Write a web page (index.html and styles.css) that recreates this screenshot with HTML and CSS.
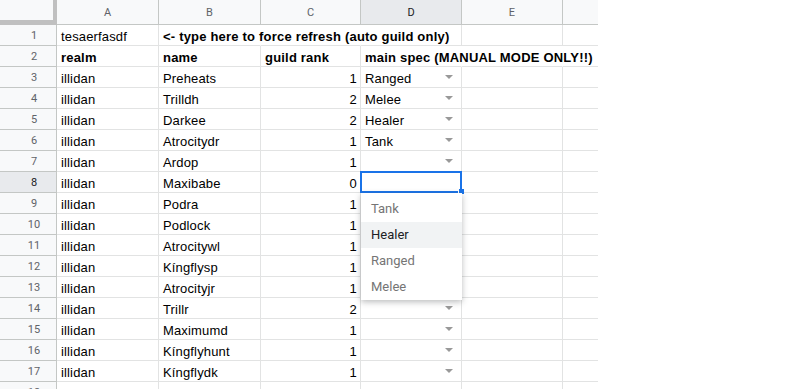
FILE: index.html
```html
<!DOCTYPE html>
<html lang="en">
<head>
    <meta charset="UTF-8">
    <title>Guild roster</title>
    <link rel="stylesheet" href="styles.css">
</head>
<body>

    <div class="sheet">
        <div class="corner"></div>
        <div class="col-head">A</div>
        <div class="col-head">B</div>
        <div class="col-head">C</div>
        <div class="col-head on">D</div>
        <div class="col-head">E</div>
        <div class="col-head last"></div>

        <div class="row-head">1</div>
        <div class="cell">tesaerfasdf</div>
        <div class="cell bold flow">&lt;- type here to force refresh (auto guild only)</div>
        <div class="cell flow"></div>
        <div class="cell"></div>
        <div class="cell"></div>
        <div class="cell last"></div>

        <div class="row-head">2</div>
        <div class="cell bold">realm</div>
        <div class="cell bold">name</div>
        <div class="cell bold">guild rank</div>
        <div class="cell bold flow">main spec (MANUAL MODE ONLY!!)</div>
        <div class="cell flow"></div>
        <div class="cell last"></div>

        <div class="row-head">3</div>
        <div class="cell">illidan</div>
        <div class="cell">Preheats</div>
        <div class="cell num">1</div>
        <div class="cell spec">Ranged<span class="arrow"></span></div>
        <div class="cell"></div>
        <div class="cell last"></div>

        <div class="row-head">4</div>
        <div class="cell">illidan</div>
        <div class="cell">Trilldh</div>
        <div class="cell num">2</div>
        <div class="cell spec">Melee<span class="arrow"></span></div>
        <div class="cell"></div>
        <div class="cell last"></div>

        <div class="row-head">5</div>
        <div class="cell">illidan</div>
        <div class="cell">Darkee</div>
        <div class="cell num">2</div>
        <div class="cell spec">Healer<span class="arrow"></span></div>
        <div class="cell"></div>
        <div class="cell last"></div>

        <div class="row-head">6</div>
        <div class="cell">illidan</div>
        <div class="cell">Atrocitydr</div>
        <div class="cell num">1</div>
        <div class="cell spec">Tank<span class="arrow"></span></div>
        <div class="cell"></div>
        <div class="cell last"></div>

        <div class="row-head">7</div>
        <div class="cell">illidan</div>
        <div class="cell">Ardop</div>
        <div class="cell num">1</div>
        <div class="cell spec"><span class="arrow"></span></div>
        <div class="cell"></div>
        <div class="cell last"></div>

        <div class="row-head on">8</div>
        <div class="cell">illidan</div>
        <div class="cell">Maxibabe</div>
        <div class="cell num">0</div>
        <div class="cell active"></div>
        <div class="cell"></div>
        <div class="cell last"></div>

        <div class="row-head">9</div>
        <div class="cell">illidan</div>
        <div class="cell">Podra</div>
        <div class="cell num">1</div>
        <div class="cell"></div>
        <div class="cell"></div>
        <div class="cell last"></div>

        <div class="row-head">10</div>
        <div class="cell">illidan</div>
        <div class="cell">Podlock</div>
        <div class="cell num">1</div>
        <div class="cell"></div>
        <div class="cell"></div>
        <div class="cell last"></div>

        <div class="row-head">11</div>
        <div class="cell">illidan</div>
        <div class="cell">Atrocitywl</div>
        <div class="cell num">1</div>
        <div class="cell"></div>
        <div class="cell"></div>
        <div class="cell last"></div>

        <div class="row-head">12</div>
        <div class="cell">illidan</div>
        <div class="cell">Kíngflysp</div>
        <div class="cell num">1</div>
        <div class="cell"></div>
        <div class="cell"></div>
        <div class="cell last"></div>

        <div class="row-head">13</div>
        <div class="cell">illidan</div>
        <div class="cell">Atrocityjr</div>
        <div class="cell num">1</div>
        <div class="cell"></div>
        <div class="cell"></div>
        <div class="cell last"></div>

        <div class="row-head">14</div>
        <div class="cell">illidan</div>
        <div class="cell">Trillr</div>
        <div class="cell num">2</div>
        <div class="cell spec"><span class="arrow"></span></div>
        <div class="cell"></div>
        <div class="cell last"></div>

        <div class="row-head">15</div>
        <div class="cell">illidan</div>
        <div class="cell">Maximumd</div>
        <div class="cell num">1</div>
        <div class="cell spec"><span class="arrow"></span></div>
        <div class="cell"></div>
        <div class="cell last"></div>

        <div class="row-head">16</div>
        <div class="cell">illidan</div>
        <div class="cell">Kíngflyhunt</div>
        <div class="cell num">1</div>
        <div class="cell spec"><span class="arrow"></span></div>
        <div class="cell"></div>
        <div class="cell last"></div>

        <div class="row-head">17</div>
        <div class="cell">illidan</div>
        <div class="cell">Kíngflydk</div>
        <div class="cell num">1</div>
        <div class="cell spec"><span class="arrow"></span></div>
        <div class="cell"></div>
        <div class="cell last"></div>

        <div class="row-head">18</div>
        <div class="cell">illidan</div>
        <div class="cell">Trillpr</div>
        <div class="cell num">1</div>
        <div class="cell spec"><span class="arrow"></span></div>
        <div class="cell"></div>
        <div class="cell last"></div>

        <!-- validation list open on D8 -->
        <ul class="picker">
            <li>Tank</li>
            <li class="hover">Healer</li>
            <li>Ranged</li>
            <li>Melee</li>
        </ul>
    </div>

</body>
</html>
```

FILE: styles.css
```css
body {
    margin: 0;
    background: #fff;
    overflow: hidden;
    font-family: "Liberation Sans", Arial, sans-serif;
}
.sheet {
    position: relative;
    display: grid;
    grid-template-columns: 57px 102px 102px 100px 101px 101px 35px;
    grid-template-rows: 25px;
    grid-auto-rows: 21px;
    width: 598px;
}
.corner, .col-head, .row-head, .cell {
    box-sizing: border-box;
    border-right: 1px solid #e2e3e3;
    border-bottom: 1px solid #e2e3e3;
}
.corner {
    background: #f8f9fa;
    border-right: 4px solid #c0c0c0;
    border-bottom: 5px solid #c0c0c0;
}
.col-head {
    display: flex;
    align-items: center;
    justify-content: center;
    background: #f8f9fa;
    border-right-color: #c4c7c5;
    border-bottom-color: #c4c7c5;
    color: #5f6368;
    font-family: Roboto, Arial, sans-serif;
    font-size: 11px;
}
.row-head {
    display: flex;
    align-items: center;
    justify-content: center;
    padding-left: 12px;
    background: #f8f9fa;
    border-right-color: #c4c7c5;
    border-bottom-color: #c4c7c5;
    color: #5f6368;
    font-family: Roboto, Arial, sans-serif;
    font-size: 11px;
}
.col-head.on, .row-head.on {
    background: #e8eaed;
    color: #202124;
}
.cell {
    display: flex;
    align-items: flex-end;
    padding: 0 3px 0 4px;
    font-size: 13px;
    line-height: 17px;
    letter-spacing: 0.15px;
    color: #000;
    white-space: nowrap;
}
.bold {
    font-weight: bold;
    letter-spacing: 0.2px;
}
.flow {
    border-right-color: transparent;
}
.last, .col-head.last {
    border-right: none;
}
.num {
    justify-content: flex-end;
}
.spec {
    padding-right: 8px;
}
.arrow {
    align-self: center;
    margin-left: auto;
    width: 0;
    height: 0;
    border-left: 4px solid transparent;
    border-right: 4px solid transparent;
    border-top: 4px solid #999;
}
.active {
    position: relative;
}
.active::before {
    content: "";
    position: absolute;
    top: -1px;
    left: -1px;
    right: -1px;
    bottom: -1px;
    border: 2px solid #1a73e8;
}
.active::after {
    content: "";
    position: absolute;
    right: -3px;
    bottom: -3px;
    width: 5px;
    height: 5px;
    background: #1a73e8;
    border: 1px solid #fff;
    border-width: 0 0 1px 1px;
}
.picker {
    position: absolute;
    left: 361px;
    top: 193px;
    width: 101px;
    margin: 0;
    padding: 3px 0 0;
    list-style: none;
    background: #fff;
    box-shadow: 0 2px 6px rgba(60, 64, 67, 0.35);
    font-family: Roboto, Arial, sans-serif;
    font-size: 13px;
}
.picker li {
    height: 26px;
    line-height: 26px;
    padding-left: 10px;
    color: #757575;
}
.picker li.hover {
    background: #f1f3f4;
    color: #202124;
}
```
